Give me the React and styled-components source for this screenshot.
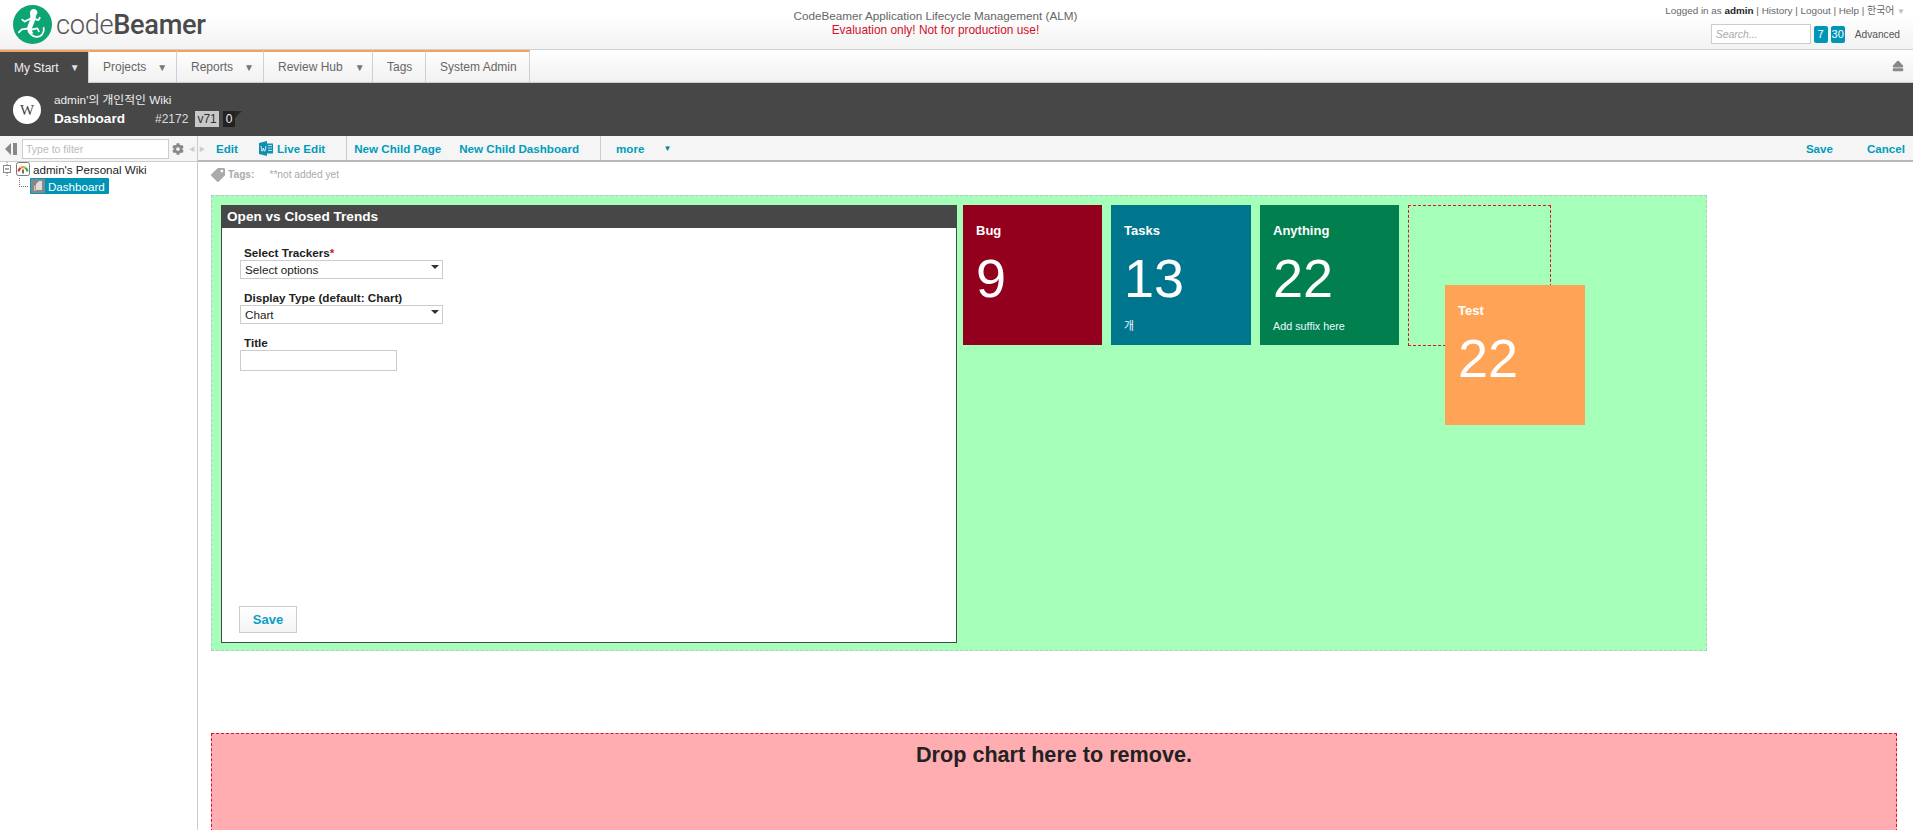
import React from "react";
import styled, { createGlobalStyle } from "styled-components";
import { FaCog, FaTag, FaEject } from "react-icons/fa";

const GlobalStyle = createGlobalStyle`
  html, body {
    margin: 0;
    padding: 0;
    background: #fff;
    overflow: hidden;
  }
  body {
    font-family: "Liberation Sans", "Noto Sans CJK KR", sans-serif;
    font-size: 12px;
    color: #222;
  }
  * {
    box-sizing: border-box;
  }
`;

const Page = styled.div`
  width: 1913px;
  height: 830px;
  display: flex;
  flex-direction: column;
  overflow: hidden;
`;

const Header = styled.header`
  height: 49px;
  flex: none;
  display: flex;
  justify-content: space-between;
  background: linear-gradient(#fff 30%, #f2f2f2);
  padding: 5px 8px 0 13px;
`;

const Logo = styled.div`
  display: flex;
  align-items: center;
  gap: 4px;
  height: 39px;
`;

const LogoText = styled.div`
  font-family: "Roboto", "Liberation Sans", sans-serif;
  font-size: 27.2px;
  font-weight: 300;
  color: #555;
  letter-spacing: -0.3px;
  b {
    font-weight: 500;
    color: #4a4a4a;
  }
`;

const Product = styled.div`
  text-align: center;
  padding-top: 4px;
  font-size: 11.7px;
  line-height: 14px;
  color: #666;
`;

const Warning = styled.div`
  font-size: 11.9px;
  color: #d0112b;
`;

const UserArea = styled.div`
  display: flex;
  flex-direction: column;
  align-items: flex-end;
  gap: 6px;
  font-size: 9.9px;
  color: #666;
  b {
    color: #222;
  }
`;

const UserLinks = styled.div`
  line-height: 12px;
  white-space: nowrap;
`;

const Arrow = styled.span`
  font-size: 8px;
  color: #bbb;
`;

const SearchRow = styled.div`
  display: flex;
  align-items: center;
  padding-right: 5px;
`;

const SearchInput = styled.input`
  width: 100px;
  height: 20px;
  border: 1px solid #ccc;
  background: #fff;
  font: italic 10.5px "Liberation Sans", sans-serif;
  padding: 0 4px;
  margin-right: 3px;
  &::placeholder {
    color: #aaa;
  }
`;

const CountBadge = styled.span`
  width: 14px;
  height: 17px;
  margin-right: 3px;
  border-radius: 2px;
  background: #0095b6;
  color: #fff;
  font-size: 11px;
  line-height: 17px;
  text-align: center;
`;

const Advanced = styled.span`
  margin-left: 7px;
  font-size: 10.2px;
  color: #555;
`;

const TabBar = styled.nav`
  height: 34px;
  flex: none;
  display: flex;
  align-items: stretch;
  position: relative;
  background: linear-gradient(#fff, #f1f1f1);
  border-top: 1px solid #d0d0d0;
  border-bottom: 1px solid #ccc;
`;

const Tab = styled.div`
  width: ${(p) => p.$width}px;
  display: flex;
  align-items: center;
  padding-left: 14px;
  gap: ${(p) => p.$gap || 0}px;
  border-top: 2px solid #f2a25c;
  border-right: 1px solid #d0d0d0;
  font-size: 12px;
  color: ${(p) => (p.$active ? "#eee" : "#666")};
  background: ${(p) => (p.$active ? "#474747" : "transparent")};
  margin-bottom: ${(p) => (p.$active ? "-1px" : "0")};
`;

const TabCaret = styled.span`
  font-size: 10px;
  color: ${(p) => (p.$active ? "#ddd" : "#777")};
`;

const EjectButton = styled.div`
  margin-left: auto;
  display: flex;
  align-items: center;
  padding-right: 9px;
  color: #888;
  font-size: 12px;
`;

const PageHead = styled.div`
  height: 53px;
  flex: none;
  background: #474747;
  display: flex;
  align-items: center;
  gap: 13px;
  padding-left: 13px;
  color: #fff;
`;

const WikiCircle = styled.div`
  width: 28px;
  height: 28px;
  border-radius: 50%;
  background: #fff;
  color: #444;
  font-family: "Liberation Serif", serif;
  font-size: 15px;
  line-height: 28px;
  text-align: center;
`;

const HeadText = styled.div`
  display: flex;
  flex-direction: column;
  gap: 3px;
`;

const Breadcrumb = styled.div`
  font-size: 11.8px;
  line-height: 15px;
  color: #eee;
`;

const TitleRow = styled.div`
  display: flex;
  align-items: center;
  height: 16px;
`;

const PageTitle = styled.div`
  font-size: 13.6px;
  font-weight: bold;
  width: 101px;
`;

const PageId = styled.span`
  font-size: 12px;
  color: #ddd;
  margin-right: 7px;
`;

const Version = styled.span`
  background: #c8c8c8;
  color: #333;
  font-size: 12px;
  height: 16px;
  line-height: 16px;
  padding: 0 2px;
  margin-right: 4px;
`;

const Comments = styled.span`
  position: relative;
  background: #222;
  color: #eee;
  font-size: 12px;
  height: 16px;
  line-height: 16px;
  padding: 0 3px;
  &::after {
    content: "";
    position: absolute;
    left: 100%;
    top: 0;
    border-top: 7px solid #2a2a2a;
    border-right: 7px solid transparent;
  }
`;

const Workspace = styled.div`
  flex: 1;
  min-height: 0;
  display: flex;
`;

const Sidebar = styled.aside`
  width: 198px;
  flex: none;
  border-right: 1px solid #ccc;
`;

const FilterBar = styled.div`
  height: 26px;
  display: flex;
  align-items: center;
  padding-left: 5px;
  background: #f5f5f5;
  border-bottom: 1px solid #ccc;
  color: #888;
  svg {
    flex: none;
  }
`;

const FilterInput = styled.input`
  width: 147px;
  flex: none;
  height: 20px;
  margin: 0 3px 0 5px;
  border: 1px solid #ccc;
  background: #fff;
  font: 10.5px "Liberation Sans", sans-serif;
  padding: 0 3px;
  &::placeholder {
    color: #bbb;
  }
`;

const SmallArrow = styled.span`
  flex: none;
  width: 6px;
  text-align: center;
  font-size: 6px;
  color: #ccc;
  margin-left: ${(p) => p.$gap}px;
`;

const Tree = styled.div`
  display: flex;
  flex-direction: column;
  gap: 2px;
`;

const TreeRow = styled.div`
  display: flex;
  align-items: center;
  height: ${(p) => p.$height}px;
  padding-left: ${(p) => p.$indent}px;
`;

const Expander = styled.svg`
  width: 10px;
  height: 15px;
  margin-right: 4px;
`;

const TreeIcon = styled.svg`
  width: 14px;
  height: 14px;
  margin-right: ${(p) => p.$gap || 0}px;
`;

const TreeLabel = styled.span`
  font-size: 11.6px;
  color: #222;
`;

const Selected = styled.span`
  display: flex;
  align-items: center;
  height: 16px;
  width: 79px;
  padding-left: 1px;
  gap: 3px;
  border-radius: 1px;
  background: #0095b6;
  color: #fff;
  font-size: 11.6px;
`;

const Connector = styled.span`
  width: 9px;
  height: 9px;
  margin: -7px 2px 0 -1px;
  border-left: 1px dotted #777;
  border-bottom: 1px dotted #777;
`;

const Main = styled.main`
  flex: 1;
  min-width: 0;
`;

const ActionBar = styled.div`
  height: 26px;
  display: flex;
  align-items: center;
  padding: 0 8px 0 0;
  background: #f5f5f5;
  border-bottom: 2px solid #b8b8b8;
`;

const Action = styled.span`
  display: flex;
  align-items: center;
  gap: 4px;
  font-size: 11.6px;
  font-weight: bold;
  color: #009cbc;
  margin-left: ${(p) => p.$gap || 0}px;
`;

const Divider = styled.span`
  width: 1px;
  height: 24px;
  background: #ccc;
  margin: 0 ${(p) => p.$right}px 0 ${(p) => p.$left}px;
`;

const MoreCaret = styled.span`
  font-size: 8px;
  color: #00829c;
  margin-left: 19px;
`;

const Spacer = styled.span`
  flex: 1;
`;

const Content = styled.div`
  padding: 0 16px 0 13px;
`;

const TagRow = styled.div`
  height: 33px;
  display: flex;
  align-items: center;
  color: #aaa;
  font-size: 10.2px;
  padding-bottom: 8px;
  svg {
    transform: scaleX(-1);
    font-size: 14px;
    margin-right: 3px;
  }
  b {
    margin-right: 15px;
  }
`;

const DashboardArea = styled.section`
  width: 1496px;
  height: 456px;
  display: flex;
  align-items: flex-start;
  gap: 9px;
  padding: 9px;
  background: #a5ffb9;
  border: 1px dashed #c4c4c4;
`;

const Widget = styled.div`
  width: 736px;
  height: 438px;
  margin-right: -3px;
  display: flex;
  flex-direction: column;
  background: #fff;
  border: 1px solid #474747;
`;

const WidgetTitle = styled.div`
  height: 22px;
  flex: none;
  background: #474747;
  color: #fff;
  font-size: 13.6px;
  font-weight: bold;
  line-height: 21px;
  padding-left: 5px;
`;

const Form = styled.form`
  flex: 1;
  display: flex;
  flex-direction: column;
  padding: 18px 18px 9px 18px;
`;

const Field = styled.div`
  margin-bottom: 12px;
`;

const Label = styled.div`
  font-size: 11.7px;
  font-weight: bold;
  line-height: 14px;
  padding-left: 4px;
  color: #222;
  i {
    font-style: normal;
    color: #d0112b;
  }
`;

const SelectBox = styled.div`
  position: relative;
  width: 203px;
  height: 19px;
  border: 1px solid #ccc;
  font-size: 11.7px;
  line-height: 17px;
  padding-left: 4px;
  &::after {
    content: "";
    position: absolute;
    right: 3px;
    top: 4px;
    border-top: 4px solid #333;
    border-left: 4px solid transparent;
    border-right: 4px solid transparent;
  }
`;

const TextBox = styled.input`
  display: block;
  width: 157px;
  height: 21px;
  border: 1px solid #ccc;
`;

const SaveButton = styled.button`
  margin-top: auto;
  margin-left: -1px;
  align-self: flex-start;
  width: 58px;
  height: 27px;
  border: 1px solid #ccc;
  background: linear-gradient(#fff, #f4f4f4);
  color: #0ba0c8;
  font: bold 13px "Liberation Sans", sans-serif;
`;

const Card = styled.div`
  width: ${(p) => p.$width || 139}px;
  height: 140px;
  flex: none;
  padding: 18px 13px 0;
  color: #fff;
  background: ${(p) => p.$color};
`;

const CardTitle = styled.div`
  font-size: 13px;
  font-weight: bold;
  line-height: 15px;
`;

const CardValue = styled.div`
  font-size: 54px;
  line-height: 62px;
  margin-top: 9px;
  font-weight: 400;
`;

const CardSuffix = styled.div`
  font-size: 10.8px;
  line-height: 14px;
  margin-top: 10px;
  color: #e6fbff;
`;

const DropSlot = styled.div`
  position: relative;
  width: 143px;
  height: 141px;
  border: 1px dashed #e0102c;
`;

const DraggedCard = styled(Card)`
  position: absolute;
  left: 36px;
  top: 79px;
`;

const RemoveZone = styled.section`
  margin-top: 82px;
  height: 200px;
  border: 1px dashed #e0102c;
  background: #ffadb1;
  font-size: 21.6px;
  font-weight: bold;
  line-height: 26px;
  text-align: center;
  padding-top: 8px;
  color: #222;
`;

const GeckoLogo = () => (
  <svg width="39" height="39" viewBox="0 0 40 40">
    <circle cx="20" cy="20" r="20" fill="#0ea574" />
    <path
      d="M22 4c3 1 4 4 2 6-1 3-1 6-3 10-2 4-2 7 0 9l-4 1c-3-3-3-7-1-11 2-4 2-7 1.500-10C17 6 19 4 22 4z"
      fill="#fff"
    />
    <g fill="none" stroke="#fff" strokeLinecap="round" strokeLinejoin="round" strokeWidth="1.8">
      <path d="M21 14l5 1.500 1.500-2.500M18 14l-6 3-2.500-2M16 24l-7 1-3 3M20 25l5-1 1.500 3" />
      <path d="M18 29.500c3 4 9 4.500 12 .5 1.500-2 2-4 1.500-6.500" />
    </g>
  </svg>
);

const GaugeIcon = () => (
  <TreeIcon viewBox="0 0 14 14" $gap={3}>
    <rect x="0.5" y="0.5" width="13" height="13" rx="2" fill="#fff" stroke="#777" />
    <path d="M2.600 9.500a4.600 4.600 0 0 1 2-3.700" fill="none" stroke="#d9352c" strokeWidth="2.200" />
    <path d="M4.600 5.800a4.600 4.600 0 0 1 4.800 0" fill="none" stroke="#f0a030" strokeWidth="2.200" />
    <path d="M9.400 5.800a4.600 4.600 0 0 1 2 3.700" fill="none" stroke="#2fa84f" strokeWidth="2.200" />
    <path d="M7 11.500V7.500" stroke="#333" strokeWidth="1.400" />
  </TreeIcon>
);

const DocIcon = () => (
  <TreeIcon viewBox="0 0 14 14">
    <rect width="14" height="14" rx="1" fill="#888" />
    <path d="M5 11V5l3-3h3v9z" fill="#ddd" />
    <path d="M3 12V7l1.500-1v6z" fill="#c4c4c4" />
  </TreeIcon>
);

const WordIcon = () => (
  <svg width="14" height="15" viewBox="0 0 14 15">
    <path d="M0 2l8-2v15l-8-2z" fill="#0e8fb0" />
    <path d="M8 2.500h6v10H8z" fill="#0e8fb0" />
    <path d="M9 4.500h4M9 7h4M9 9.500h4" stroke="#bfe6f0" strokeWidth="0.9" />
    <path d="M2 5l.8 5h.8l.8-3 .8 3h.8L7 5" fill="none" stroke="#fff" strokeWidth="0.8" />
  </svg>
);

const CollapseIcon = () => (
  <svg width="12" height="12" viewBox="0 0 12 12">
    <path d="M6 0v12L0 6z" fill="#888" />
    <rect x="8" y="0" width="4" height="12" fill="#888" />
  </svg>
);

const App = () => {
  return (
    <Page>
      <GlobalStyle />
      <Header>
        <Logo>
          <GeckoLogo />
          <LogoText>
            code<b>Beamer</b>
          </LogoText>
        </Logo>
        <Product>
          CodeBeamer Application Lifecycle Management (ALM)
          <Warning>Evaluation only! Not for production use!</Warning>
        </Product>
        <UserArea>
          <UserLinks>
            Logged in as <b>admin</b> | History | Logout | Help | 한국어 <Arrow>▼</Arrow>
          </UserLinks>
          <SearchRow>
            <SearchInput placeholder="Search..." />
            <CountBadge>7</CountBadge>
            <CountBadge>30</CountBadge>
            <Advanced>Advanced</Advanced>
          </SearchRow>
        </UserArea>
      </Header>

      <TabBar>
        <Tab $active $width={89} $gap={11}>
          My Start <TabCaret $active>▼</TabCaret>
        </Tab>
        <Tab $width={88} $gap={11}>
          Projects <TabCaret>▼</TabCaret>
        </Tab>
        <Tab $width={87} $gap={11}>
          Reports <TabCaret>▼</TabCaret>
        </Tab>
        <Tab $width={109} $gap={12}>
          Review Hub <TabCaret>▼</TabCaret>
        </Tab>
        <Tab $width={53}>Tags</Tab>
        <Tab $width={104}>System Admin</Tab>
        <EjectButton>
          <FaEject />
        </EjectButton>
      </TabBar>

      <PageHead>
        <WikiCircle>W</WikiCircle>
        <HeadText>
          <Breadcrumb>admin'의 개인적인 Wiki</Breadcrumb>
          <TitleRow>
            <PageTitle>Dashboard</PageTitle>
            <PageId>#2172</PageId>
            <Version>v71</Version>
            <Comments>0</Comments>
          </TitleRow>
        </HeadText>
      </PageHead>

      <Workspace>
        <Sidebar>
          <FilterBar>
            <CollapseIcon />
            <FilterInput placeholder="Type to filter" />
            <FaCog size={12} />
            <SmallArrow $gap={5}>◀</SmallArrow>
          </FilterBar>
          <Tree>
            <TreeRow $height={14} $indent={2}>
              <Expander viewBox="0 0 10 15">
                <path d="M5 0v3M5 11v4" stroke="#777" strokeDasharray="1 1" />
                <rect x="1.500" y="3.500" width="7" height="7" fill="#fff" stroke="#888" />
                <path d="M3 7h4" stroke="#555" />
              </Expander>
              <GaugeIcon />
              <TreeLabel>admin's Personal Wiki</TreeLabel>
            </TreeRow>
            <TreeRow $height={16} $indent={20}>
              <Connector />
              <Selected>
                <DocIcon />
                Dashboard
              </Selected>
            </TreeRow>
          </Tree>
        </Sidebar>

        <Main>
          <ActionBar>
            <SmallArrow $gap={1}>▶</SmallArrow>
            <Action $gap={11}>Edit</Action>
            <Action $gap={21}>
              <WordIcon />
              Live Edit
            </Action>
            <Divider $left={21} $right={7} />
            <Action>New Child Page</Action>
            <Action $gap={18}>New Child Dashboard</Action>
            <Divider $left={21} $right={15} />
            <Action>more</Action>
            <MoreCaret>▼</MoreCaret>
            <Spacer />
            <Action>Save</Action>
            <Action $gap={34}>Cancel</Action>
          </ActionBar>

          <Content>
            <TagRow>
              <FaTag />
              <b>Tags:</b>
              **not added yet
            </TagRow>

            <DashboardArea>
              <Widget>
                <WidgetTitle>Open vs Closed Trends</WidgetTitle>
                <Form>
                  <Field>
                    <Label>
                      Select Trackers<i>*</i>
                    </Label>
                    <SelectBox>Select options</SelectBox>
                  </Field>
                  <Field>
                    <Label>Display Type (default: Chart)</Label>
                    <SelectBox>Chart</SelectBox>
                  </Field>
                  <Field>
                    <Label>Title</Label>
                    <TextBox />
                  </Field>
                  <SaveButton type="button">Save</SaveButton>
                </Form>
              </Widget>
              <Card $color="#93001e">
                <CardTitle>Bug</CardTitle>
                <CardValue>9</CardValue>
              </Card>
              <Card $color="#00768e" $width={140}>
                <CardTitle>Tasks</CardTitle>
                <CardValue>13</CardValue>
                <CardSuffix>개</CardSuffix>
              </Card>
              <Card $color="#017f4f">
                <CardTitle>Anything</CardTitle>
                <CardValue>22</CardValue>
                <CardSuffix>Add suffix here</CardSuffix>
              </Card>
              <DropSlot>
                <DraggedCard $color="#ffa357" $width={140}>
                  <CardTitle>Test</CardTitle>
                  <CardValue>22</CardValue>
                </DraggedCard>
              </DropSlot>
            </DashboardArea>

            <RemoveZone>Drop chart here to remove.</RemoveZone>
          </Content>
        </Main>
      </Workspace>
    </Page>
  );
};

export default App;
